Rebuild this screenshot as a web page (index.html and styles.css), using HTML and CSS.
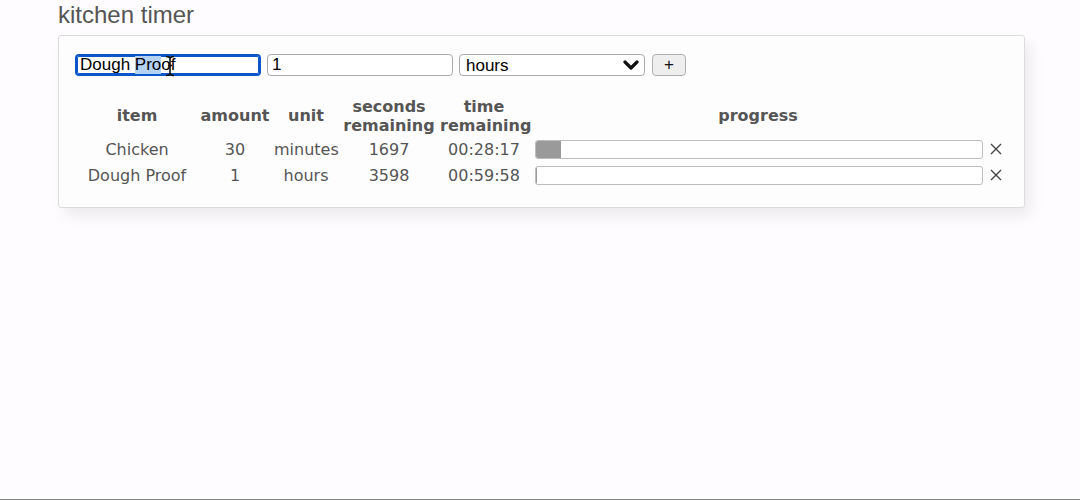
FILE: index.html
```html
<!DOCTYPE html>
<html>
<head>
<meta charset="utf-8">
<link rel="stylesheet" href="styles.css">
</head>
<body>
<h1 class="title">kitchen timer</h1>
<div class="card">
  <form class="add-row">
    <div class="field-wrap">
      <input id="item" class="field focused" type="text" value="Dough Proof">
      <svg class="ibeam" width="10" height="22" viewBox="0 0 10 22"><path d="M1 1.5 Q5 1.5 5 4 L5 18 Q5 20.5 1 20.5 M9 1.5 Q5 1.5 5 4 M5 18 Q5 20.5 9 20.5 M3 10.5 H7" fill="none" stroke="#111" stroke-width="1.6"/></svg>
    </div>
    <input class="field" type="text" value="1">
    <div class="select-wrap">
      <select class="field select"><option>hours</option><option>minutes</option><option>seconds</option></select>
      <svg class="chev" width="16" height="11" viewBox="0 0 16 11"><path d="M2 2 L8 8 L14 2" fill="none" stroke="#111" stroke-width="3.2" stroke-linecap="round" stroke-linejoin="round"/></svg>
    </div>
    <button type="button" class="add-btn">+</button>
  </form>
  <table class="timers">
    <colgroup>
      <col class="c-item"><col class="c-amount"><col class="c-unit"><col class="c-sec"><col class="c-time"><col class="c-prog"><col class="c-x">
    </colgroup>
    <thead>
      <tr><th>item</th><th>amount</th><th>unit</th><th>seconds remaining</th><th>time remaining</th><th>progress</th><th></th></tr>
    </thead>
    <tbody>
      <tr>
        <td>Chicken</td><td>30</td><td>minutes</td><td>1697</td><td>00:28:17</td>
        <td class="prog"><div class="bar"><div class="fill" style="width:5.7%"></div></div></td>
        <td class="x"><svg width="12" height="12" viewBox="0 0 12 12"><path d="M1 1 L11 11 M11 1 L1 11" stroke="#444" stroke-width="1.4"/></svg></td>
      </tr>
      <tr>
        <td>Dough Proof</td><td>1</td><td>hours</td><td>3598</td><td>00:59:58</td>
        <td class="prog"><div class="bar"><div class="fill" style="width:0.3%"></div></div></td>
        <td class="x"><svg width="12" height="12" viewBox="0 0 12 12"><path d="M1 1 L11 11 M11 1 L1 11" stroke="#444" stroke-width="1.4"/></svg></td>
      </tr>
    </tbody>
  </table>
</div>
<script>
  var f = document.getElementById('item');
  f.focus();
  f.setSelectionRange(6, 9);
</script>
</body>
</html>
```

FILE: styles.css
```css
html { height: 100%; }
body {
  margin: 0;
  min-height: 100%;
  box-sizing: border-box;
  padding: 0 0 0 58px;
  background: #fefcfe;
  border-bottom: 1px solid #8a8a8a;
  font-family: "DejaVu Sans", Verdana, sans-serif;
  color: #555;
}
.title {
  margin: 0;
  padding-top: 1px;
  font-family: "Liberation Sans", Arial, sans-serif;
  font-weight: normal;
  font-size: 24px;
  line-height: 28px;
  color: #555;
}
.card {
  margin-top: 6px;
  width: 949px;
  border: 1px solid #dcdcdc;
  border-radius: 3px;
  background: #fefdfe;
  box-shadow: 6px 8px 14px rgba(0, 0, 0, 0.07);
  padding: 18px 0 18px 16px;
}
.add-row {
  display: flex;
  align-items: center;
  gap: 6px;
  margin: 0;
  height: 22px;
}
.field-wrap, .select-wrap { position: relative; display: flex; }
.field {
  box-sizing: border-box;
  width: 186px;
  height: 22px;
  margin: 0;
  padding: 0 4px;
  border: 1px solid #a9a9a9;
  border-radius: 4px;
  background: #fff;
  font-family: "Liberation Sans", Arial, sans-serif;
  font-size: 17px;
  color: #000;
  outline: none;
}
.field.focused, .field.focused:focus {
  border: 2px solid #0b57c9;
  box-shadow: inset 0 0 0 1px #0b57c9;
  padding: 0 3px;
}
.field::selection { background: #b4d2f4; color: #000; }
.ibeam { position: absolute; left: 90px; top: 1px; }
.select {
  -webkit-appearance: none;
  appearance: none;
  width: 186px;
  padding: 0 6px;
  border-radius: 4px;
}
.chev { position: absolute; right: 6px; top: 6px; pointer-events: none; }
.add-btn {
  box-sizing: border-box;
  width: 34px;
  height: 22px;
  margin: 0 0 1px 1px;
  padding: 0;
  border: 1px solid #b0b0b0;
  border-radius: 4px;
  background: #efeeef;
  font-family: "Liberation Sans", Arial, sans-serif;
  font-size: 17px;
  line-height: 18px;
  color: #111;
}
.timers {
  margin: 19px 0 0 3px;
  border-collapse: collapse;
  table-layout: fixed;
  width: 928px;
  font-size: 16px;
}
.c-item { width: 118px; }
.c-amount { width: 78px; }
.c-unit { width: 64px; }
.c-sec { width: 102px; }
.c-time { width: 88px; }
.c-prog { width: 460px; }
.c-x { width: 18px; }
.timers th {
  height: 41px;
  padding: 0;
  font-weight: bold;
  line-height: 19px;
  text-align: center;
  vertical-align: middle;
  color: #555;
}
.timers td {
  height: 26px;
  padding: 0;
  text-align: center;
  vertical-align: middle;
  white-space: nowrap;
}
.timers td.prog { padding: 0 5px 0 7px; }
.bar {
  box-sizing: border-box;
  height: 19px;
  border: 1px solid #bdbdbd;
  border-radius: 3px;
  background: #fff;
  overflow: hidden;
}
.fill { height: 100%; background: #9a9a9a; min-width: 1px; }
.timers td.x { text-align: left; }
.timers td.x svg { display: block; margin-left: 2px; }
.card { padding-bottom: 19px; }
```
